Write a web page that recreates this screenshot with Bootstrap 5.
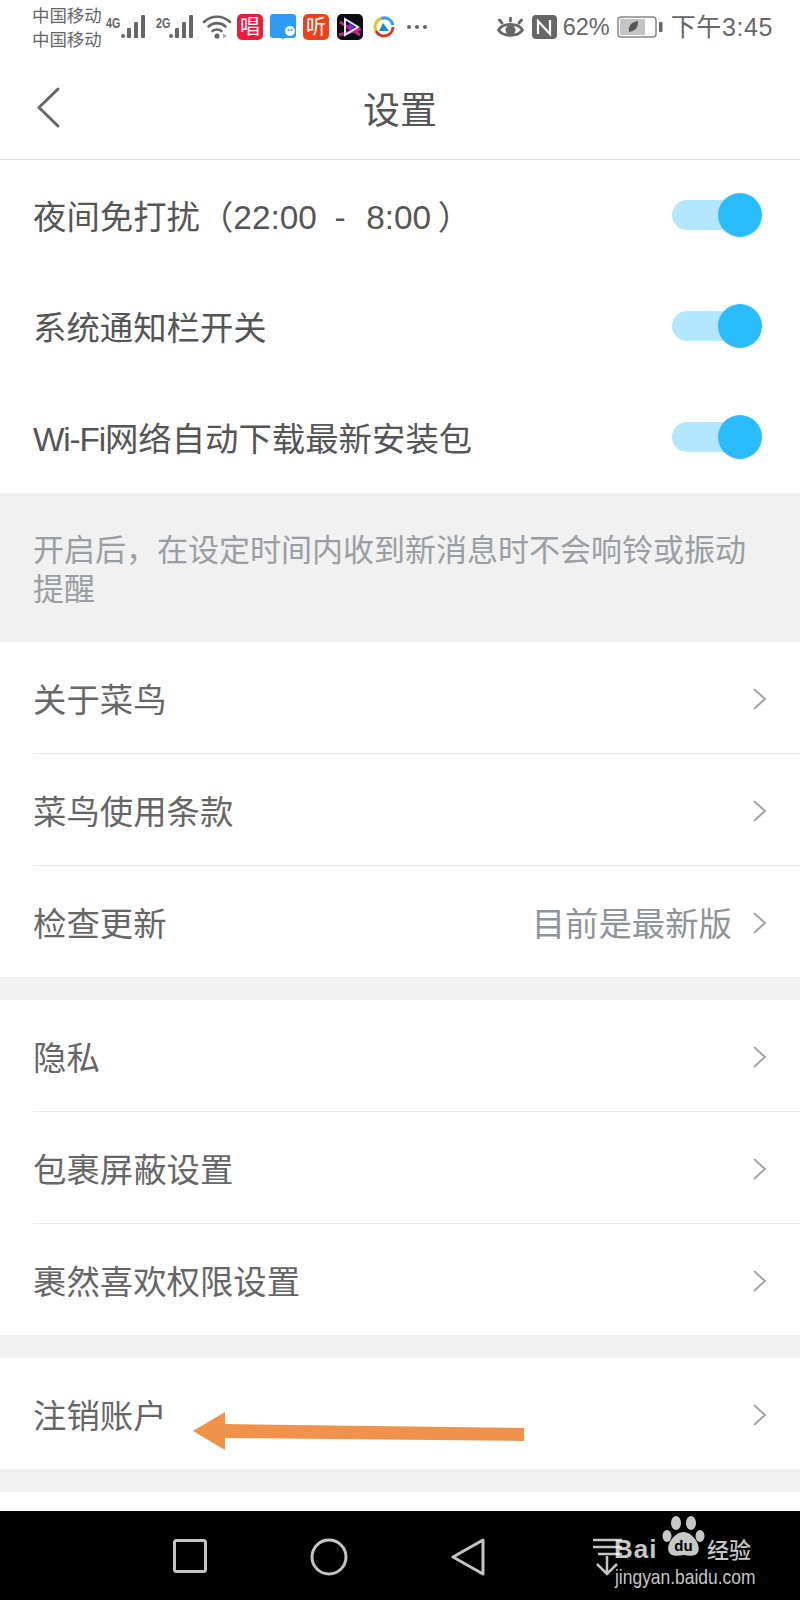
<!DOCTYPE html>
<html lang="zh-CN">
<head>
  <meta charset="UTF-8">
  <title>设置</title>
  <link href="https://cdn.jsdelivr.net/npm/bootstrap@5.3.3/dist/css/bootstrap.min.css" rel="stylesheet">
  <style>
    body {
      width: 800px;
      height: 1600px;
      overflow: hidden;
      background: #fff;
      color: #666;
      font-family: "Liberation Sans", "Noto Sans CJK SC", sans-serif;
      position: relative;
    }
    .status-bar { height: 60px; padding: 0 27px 6px 32px; color: #666; }
    .carrier { font-size: 17.4px; line-height: 24px; width: 74px; margin-top: 1px; }
    .sig-label { font-weight: 700; font-size: 15px; line-height: 12px; width: 14px; align-self: flex-start; margin-top: 14px; transform: scaleX(.72); transform-origin: left center; }
    .sig-two { margin-left: 9px; width: 12px; }
    .sig-wifi { margin-left: 7px; }
    .app-ico { width: 26px; height: 26px; border-radius: 5px; color: #fff; font-size: 20px; line-height: 26px; text-align: center; }
    .app-red { background: #ee1c3c; margin-left: 5px; }
    .app-orange { background: #e8431a; margin-left: 7px; }
    .app-blue { margin-left: 7px; }
    .app-dark { margin-left: 8px; }
    .app-tx { margin-left: 10px; }
    .app-more { margin-left: 12px; }
    .pct-text { font-size: 23.5px; line-height: 30px; margin-left: 6px; }
    .time-text { font-size: 25px; line-height: 30px; letter-spacing: .6px; margin-left: 8px; }
    .batt-ico { margin-left: 7px; }
    .title-bar { height: 100px; border-bottom: 1px solid #dedede; position: relative; }
    .title-text { font-size: 37px; color: #555; line-height: 1; margin-top: 4px; }
    .back-ico { position: absolute; left: 36px; top: 26px; }
    .set-list { background: #fff; }
    .set-row { padding-left: 33px; }
    .set-line { height: 112px; border-bottom: 1px solid #e8e8e8; padding-right: 33px; font-size: 33.4px; line-height: 1; color: #666; }
    .set-line > span { padding-top: 6px; }
    .set-line > svg { margin-top: 2px; }
    .set-row:last-child .set-line { height: 111px; border-bottom: 0; }
    .tog-line { height: 111px; border-bottom: 0; padding-right: 38px; color: #555; }
    .tog-line > span { padding-top: 4px; }
    .tm-dash { margin: 0 2px 0 -1px; }
    .wifi-text { letter-spacing: -1.2px; }
    .set-value { color: #8f9499; margin-right: 20px; }
    .set-gap { height: 23px; background: #f1f1f1; }
    .set-note { height: 149px; background: #f1f1f1; padding: 38px 33px 0; font-size: 31px; line-height: 39px; color: #9a9ea3; }
    .tog-track { width: 90px; height: 44px; position: relative; margin-top: -2px; }
    .tog-track::before { content: ""; position: absolute; left: 0; top: 7px; width: 70px; height: 30px; border-radius: 15px; background: #b3e7ff; }
    .tog-track::after { content: ""; position: absolute; right: 0; top: 0; width: 44px; height: 44px; border-radius: 50%; background: #2bbcff; }
    .nav-bar { position: absolute; left: 0; right: 0; top: 1511px; height: 89px; background: #000; }
    .nav-ico { position: absolute; top: 27px; }
    .nav-square { left: 172px; }
    .nav-circle { left: 310px; }
    .nav-back { left: 450px; }
    .nav-down { left: 592px; }
    .note-arrow { position: absolute; left: 190px; top: 1408px; }
    .wm { position: absolute; left: 600px; top: 1512px; width: 170px; height: 80px; color: rgba(255,255,255,.78); }
    .wm-bai { position: absolute; left: 14px; top: 24px; font: 700 26px/1 "Liberation Sans", sans-serif; letter-spacing: 1px; }
    .wm-jy { position: absolute; left: 107px; top: 25px; font-size: 22px; line-height: 1; font-family: "Noto Sans CJK SC", sans-serif; font-weight: 500; }
    .wm-url { position: absolute; left: 15px; top: 54px; font: 21px/1 "Liberation Sans", sans-serif; white-space: nowrap; transform: scaleX(.83); transform-origin: left center; }
    .wm-paw { position: absolute; left: 62px; top: 4px; }
  </style>
</head>
<body>
  <!-- status bar -->
  <div class="status-bar d-flex justify-content-between align-items-center">
    <div class="d-flex align-items-center">
      <div class="carrier">中国移动<br>中国移动</div>
      <span class="sig-label">4G</span>
      <svg width="27" height="26" viewBox="0 0 27 26"><g fill="#666"><rect x="1" y="20" width="4" height="4" rx="2"/><rect x="7" y="14" width="4" height="10" rx="1"/><rect x="14" y="8" width="4" height="16" rx="1"/><rect x="21" y="1" width="4" height="23" rx="1"/></g></svg>
      <span class="sig-label sig-two">2G</span>
      <svg width="27" height="26" viewBox="0 0 27 26"><g fill="#666"><rect x="1" y="20" width="4" height="4" rx="2"/><rect x="7" y="14" width="4" height="10" rx="1"/><rect x="14" y="8" width="4" height="16" rx="1"/><rect x="21" y="1" width="4" height="23" rx="1"/></g></svg>
      <svg width="30" height="26" viewBox="0 0 30 26" class="sig-wifi"><g fill="none" stroke="#666" stroke-width="2.6" stroke-linecap="round"><path d="M2 8C9 1 21 1 28 8"/><path d="M6.500 12.500C11.500 8 18.500 8 23.500 12.500"/><path d="M10.500 17C13 15 17 15 19.500 17"/></g><circle cx="15" cy="22" r="2.600" fill="#666"/><path d="M21 19.500v5l4-2.500z" fill="#aaa"/></svg>
      <div class="app-ico app-red">唱</div>
      <svg width="26" height="26" viewBox="0 0 26 26" class="app-blue"><path d="M3 0h20a3 3 0 0 1 3 3v18a3 3 0 0 1-3 3H14l-1 2-1-2H3a3 3 0 0 1-3-3V3a3 3 0 0 1 3-3z" fill="#2f9bf5"/><circle cx="20" cy="17" r="5" fill="#fff"/><circle cx="18.500" cy="16" r="1" fill="#2f9bf5"/><circle cx="21.500" cy="16" r="1" fill="#2f9bf5"/></svg>
      <div class="app-ico app-orange">听</div>
      <svg width="26" height="26" viewBox="0 0 26 26" class="app-dark"><rect width="26" height="26" rx="5" fill="#0c0c12"/><path d="M2 21L24 15M3 8l20 13" stroke="#c0248f" stroke-width="3"/><path d="M8 5l13 8-13 8z" fill="none" stroke="#e9e9f2" stroke-width="2"/><path d="M12 9l6 4-6 4z" fill="#6a35d8"/></svg>
      <svg width="22" height="22" viewBox="0 0 22 22" class="app-tx"><path d="M3 15A9 9 0 0 1 8 2.500" fill="none" stroke="#e9c21f" stroke-width="3"/><path d="M8 2.500A9 9 0 0 1 20 9" fill="none" stroke="#3ba1e8" stroke-width="3"/><path d="M20 11A9 9 0 0 1 3 15" fill="none" stroke="#cf3a2c" stroke-width="3"/><path d="M10 7l6 8H6z" fill="#1c86d8"/></svg>
      <svg width="20" height="6" viewBox="0 0 20 6" class="app-more"><g fill="#666"><circle cx="2" cy="3" r="2"/><circle cx="10" cy="3" r="2"/><circle cx="18" cy="3" r="2"/></g></svg>
    </div>
    <div class="d-flex align-items-center">
      <svg width="27" height="21" viewBox="0 0 27 21"><g fill="none" stroke="#666" stroke-width="2.800" stroke-linecap="round"><path d="M1.500 13C6 5.500 21 5.500 25.500 13C21 20 6 20 1.500 13z"/><path d="M5 6L2.500 3M13.500 4V1M22 6l2.500-3"/></g><circle cx="13.500" cy="13" r="5" fill="#666"/></svg>
      <svg width="25" height="24" viewBox="0 0 25 24" class="ms-2"><rect width="25" height="24" rx="4" fill="#666"/><path d="M6 19V6l12 13V5" fill="none" stroke="#fff" stroke-width="2.200"/></svg>
      <span class="pct-text">62%</span>
      <svg width="46" height="22" viewBox="0 0 46 22" class="batt-ico"><rect x="1" y="1" width="38" height="20" rx="3" fill="none" stroke="#888" stroke-width="1.500"/><rect x="3" y="3" width="25" height="16" fill="#c4c4c4"/><path d="M12 16C11 9 15 6 21 5C21 12 18 15 12 16z" fill="#555"/><rect x="42" y="6" width="3.500" height="10" rx="1" fill="#666"/></svg>
      <span class="time-text">下午3:45</span>
    </div>
  </div>

  <!-- title -->
  <div class="title-bar d-flex justify-content-center align-items-center">
    <svg class="back-ico" width="26" height="44" viewBox="0 0 26 44"><path d="M22 3L3 21.500L22 40" fill="none" stroke="#666" stroke-width="3" stroke-linecap="round" stroke-linejoin="round"/></svg>
    <div class="title-text">设置</div>
  </div>

  <!-- toggles -->
  <div class="set-list">
    <div class="set-row"><div class="set-line tog-line d-flex justify-content-between align-items-center"><span>夜间免打扰（22:00 &nbsp;<span class="tm-dash">-</span>&nbsp; 8:00&thinsp;）</span><div class="tog-track"></div></div></div>
    <div class="set-row"><div class="set-line tog-line d-flex justify-content-between align-items-center"><span>系统通知栏开关</span><div class="tog-track"></div></div></div>
    <div class="set-row"><div class="set-line tog-line d-flex justify-content-between align-items-center"><span><span class="wifi-text">Wi-Fi</span>网络自动下载最新安装包</span><div class="tog-track"></div></div></div>
  </div>

  <div class="set-note">开启后，在设定时间内收到新消息时不会响铃或振动提醒</div>

  <div class="set-list">
    <div class="set-row"><div class="set-line d-flex justify-content-between align-items-center"><span>关于菜鸟</span><svg width="15" height="24" viewBox="0 0 15 24"><path d="M2 2l11 10L2 22" fill="none" stroke="#a5a5a5" stroke-width="2"/></svg></div></div>
    <div class="set-row"><div class="set-line d-flex justify-content-between align-items-center"><span>菜鸟使用条款</span><svg width="15" height="24" viewBox="0 0 15 24"><path d="M2 2l11 10L2 22" fill="none" stroke="#a5a5a5" stroke-width="2"/></svg></div></div>
    <div class="set-row"><div class="set-line d-flex align-items-center"><span class="me-auto">检查更新</span><span class="set-value">目前是最新版</span><svg width="15" height="24" viewBox="0 0 15 24"><path d="M2 2l11 10L2 22" fill="none" stroke="#a5a5a5" stroke-width="2"/></svg></div></div>
  </div>
  <div class="set-gap"></div>
  <div class="set-list">
    <div class="set-row"><div class="set-line d-flex justify-content-between align-items-center"><span>隐私</span><svg width="15" height="24" viewBox="0 0 15 24"><path d="M2 2l11 10L2 22" fill="none" stroke="#a5a5a5" stroke-width="2"/></svg></div></div>
    <div class="set-row"><div class="set-line d-flex justify-content-between align-items-center"><span>包裹屏蔽设置</span><svg width="15" height="24" viewBox="0 0 15 24"><path d="M2 2l11 10L2 22" fill="none" stroke="#a5a5a5" stroke-width="2"/></svg></div></div>
    <div class="set-row"><div class="set-line d-flex justify-content-between align-items-center"><span>裹然喜欢权限设置</span><svg width="15" height="24" viewBox="0 0 15 24"><path d="M2 2l11 10L2 22" fill="none" stroke="#a5a5a5" stroke-width="2"/></svg></div></div>
  </div>
  <div class="set-gap"></div>
  <div class="set-list">
    <div class="set-row"><div class="set-line d-flex justify-content-between align-items-center"><span>注销账户</span><svg width="15" height="24" viewBox="0 0 15 24"><path d="M2 2l11 10L2 22" fill="none" stroke="#a5a5a5" stroke-width="2"/></svg></div></div>
  </div>
  <div class="set-gap"></div>

  <!-- annotation arrow -->
  <svg class="note-arrow" width="340" height="46" viewBox="0 0 340 46"><path d="M3 23L35 4V16L334 20V33L35 30V42z" fill="#f0924b"/></svg>

  <!-- android nav bar -->
  <div class="nav-bar">
    <svg class="nav-ico nav-square" width="36" height="36" viewBox="0 0 36 36"><rect x="2.500" y="2.500" width="31" height="31" rx="2" fill="none" stroke="#c4c4c4" stroke-width="3"/></svg>
    <svg class="nav-ico nav-circle" width="38" height="38" viewBox="0 0 38 38"><circle cx="19" cy="19" r="17" fill="none" stroke="#c4c4c4" stroke-width="3"/></svg>
    <svg class="nav-ico nav-back" width="36" height="38" viewBox="0 0 36 38"><path d="M33 2V36L3 19z" fill="none" stroke="#c4c4c4" stroke-width="3" stroke-linejoin="round"/></svg>
    <svg class="nav-ico nav-down" width="34" height="38" viewBox="0 0 34 38"><path d="M1 2h29M1 9h29M6 16h24M15 18v17M5 26l10 10 10-10" fill="none" stroke="#c4c4c4" stroke-width="2.500"/></svg>
  </div>

  <!-- watermark -->
  <div class="wm">
    <span class="wm-bai">Bai</span>
    <svg class="wm-paw" width="44" height="42" viewBox="0 0 44 42"><g fill="currentColor"><ellipse cx="14" cy="7" rx="5" ry="7"/><ellipse cx="29" cy="7" rx="5" ry="7"/><ellipse cx="5" cy="20" rx="4.500" ry="6"/><ellipse cx="38" cy="20" rx="4.500" ry="6"/><path d="M21.500 16c8 0 17 11 15 19c-2 6-9 5-15 4c-6 1-13 2-15-4c-2-8 7-19 15-19z"/></g><text x="21.500" y="35" text-anchor="middle" font-family="Liberation Sans, sans-serif" font-weight="700" font-size="15" fill="#000">du</text></svg>
    <span class="wm-jy">经验</span>
    <span class="wm-url">jingyan.baidu.com</span>
  </div>
  <script src="https://cdn.jsdelivr.net/npm/bootstrap@5.3.3/dist/js/bootstrap.bundle.min.js"></script>
</body>
</html>
